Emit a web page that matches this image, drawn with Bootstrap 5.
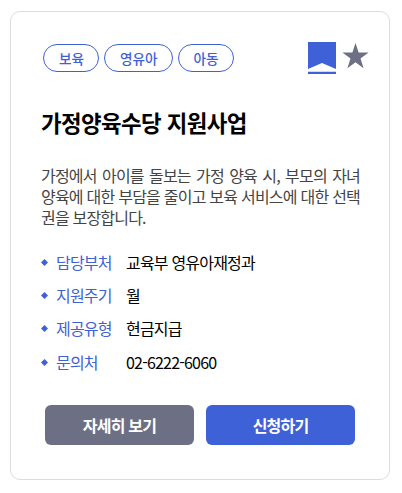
<!DOCTYPE html>
<html lang="ko">
<head>
<meta charset="utf-8">
<meta name="viewport" content="width=device-width, initial-scale=1">
<title>가정양육수당 지원사업</title>
<link href="https://cdn.jsdelivr.net/npm/bootstrap@5.3.0/dist/css/bootstrap.min.css" rel="stylesheet">
<style>
body{font-family:"Noto Sans CJK KR","Noto Sans",sans-serif;letter-spacing:-.8px;color:#000;font-size:16px;line-height:21px}
.service{margin:11px 12px 0 10px;height:469px;border:1px solid #ddd;border-radius:10px;padding:30px 20px 0 30px}
.tags{padding:2px 0 0 2px;gap:5px}
.tag{height:28px;border:1px solid #3f61d7;border-radius:14px;color:#3f61d7;font-size:13.6px;font-weight:500;line-height:26px;padding:0 14px 0 15px;letter-spacing:0}
.title{font-size:22.4px;font-weight:700;line-height:30px;margin:33px 0 0;letter-spacing:-.6px}
.desc{width:319px;color:#444;text-align:justify;margin:28px 0 0}
.info{margin:24px 0 0}
.info li{height:33px}
.info li:last-child{padding-top:1px}
.info svg{margin:0 8px 0 0}
.key{width:70px;color:#3f61d7}
.actions{padding:5px 14px 0 4px;gap:12px}
.actions .btn{height:40px;border:0;border-radius:6px;padding:0;color:#fff;font-size:16px;font-weight:700;line-height:40px;letter-spacing:-.8px}
.btn-more{background:#6d7084}
.btn-apply{background:#3f61d7}
</style>
</head>
<body class="bg-white">
<article class="service card">
<div class="d-flex justify-content-between">
<div class="tags d-flex"><span class="tag">보육</span><span class="tag">영유아</span><span class="tag">아동</span></div>
<svg width="61" height="32" viewBox="0 0 61 32"><path fill="#3f61d7" d="M0 0h28v27L14 21 0 27zM0 29.7h28V32H0z"/><path fill="#6d7084" d="M47.5 1l3.1 9.6h10l-8.1 6 3.1 9.7-8.1-6-8.1 6 3.1-9.7-8.1-6h10z"/></svg>
</div>
<h1 class="title">가정양육수당 지원사업</h1>
<p class="desc">가정에서 아이를 돌보는 가정 양육 시, 부모의 자녀 양육에 대한 부담을 줄이고 보육 서비스에 대한 선택권을 보장합니다.</p>
<ul class="info list-unstyled mb-3">
<li class="d-flex"><svg width="7" height="21" viewBox="0 0 7 21"><path fill="#3f61d7" d="M3.5 7L7 10.5 3.5 14 0 10.5z"/></svg><span class="key">담당부처</span><span>교육부 영유아재정과</span></li>
<li class="d-flex"><svg width="7" height="21" viewBox="0 0 7 21"><path fill="#3f61d7" d="M3.5 7L7 10.5 3.5 14 0 10.5z"/></svg><span class="key">지원주기</span><span>월</span></li>
<li class="d-flex"><svg width="7" height="21" viewBox="0 0 7 21"><path fill="#3f61d7" d="M3.5 7L7 10.5 3.5 14 0 10.5z"/></svg><span class="key">제공유형</span><span>현금지급</span></li>
<li class="d-flex"><svg width="7" height="21" viewBox="0 0 7 21"><path fill="#3f61d7" d="M3.5 7L7 10.5 3.5 14 0 10.5z"/></svg><span class="key">문의처</span><span>02-6222-6060</span></li>
</ul>
<div class="actions d-flex"><button class="btn btn-more flex-fill w-50">자세히 보기</button><button class="btn btn-apply flex-fill w-50">신청하기</button></div>
</article>
<script src="https://cdn.jsdelivr.net/npm/bootstrap@5.3.0/dist/js/bootstrap.bundle.min.js"></script>
</body>
</html>
